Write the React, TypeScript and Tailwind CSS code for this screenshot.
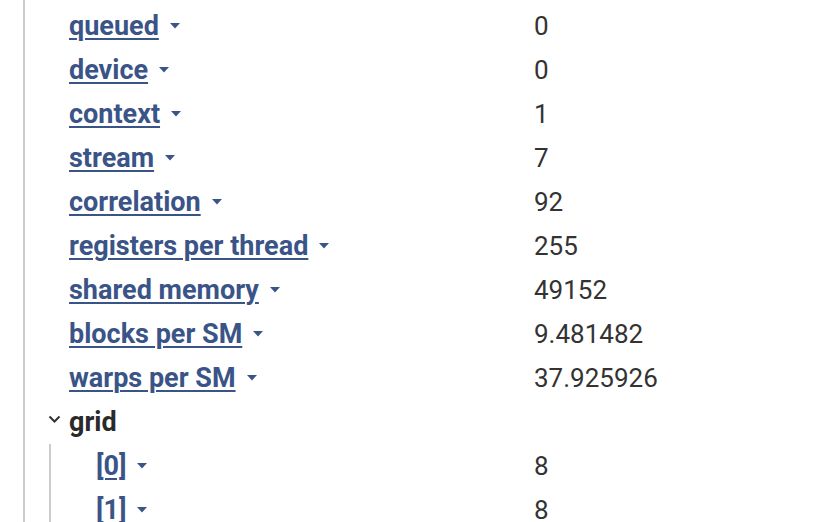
import React from "react";

const blue = "text-[#3a5488]";

function Caret() {
  return (
    <svg width="10" height="6" viewBox="0 0 10 6" className="ml-[11px] shrink-0">
      <path d="M0 0 L10 0 L5 5.5 Z" fill="#3a5488" />
    </svg>
  );
}

function Row({ label, value, w }: { label: string; value: string; w: string }) {
  return (
    <div className="flex h-[44px] items-center">
      <div className={`flex items-center ${w}`}>
        <span className={`text-[27px] font-bold ${blue} underline decoration-2 underline-offset-[3px]`}>{label}</span>
        <Caret />
      </div>
      <div className="text-[#333333]">{value}</div>
    </div>
  );
}

const rows: [string, string][] = [
  ["queued", "0"],
  ["device", "0"],
  ["context", "1"],
  ["stream", "7"],
  ["correlation", "92"],
  ["registers per thread", "255"],
  ["shared memory", "49152"],
  ["blocks per SM", "9.481482"],
  ["warps per SM", "37.925926"],
];

export default function App() {
  return (
    <div
      className="h-[522px] w-[826px] overflow-hidden bg-white pl-[23px] text-[26px] leading-[44px]"
      style={{ fontFamily: "Roboto, sans-serif" }}
    >
      <div className="h-full border-l-2 border-[#cccccc] pl-[44px] pt-[4px]">
        {rows.map(([l, v]) => (
          <Row key={l} label={l} value={v} w="w-[465px]" />
        ))}
        <div className="-ml-[21px] flex h-[44px] items-center">
          <svg width="21" height="20" viewBox="0 0 21 20" className="shrink-0">
            <path d="M1.5 4.5 L6.5 9.5 L11.5 4.5" fill="none" stroke="#333" strokeWidth="2" />
          </svg>
          <span className="text-[27px] font-bold text-[#2a2a2a]">grid</span>
        </div>
        <div className="-ml-[20px] border-l-2 border-[#cccccc] pl-[45px]">
          <Row label="[0]" value="8" w="w-[438px]" />
          <Row label="[1]" value="8" w="w-[438px]" />
        </div>
      </div>
    </div>
  );
}
